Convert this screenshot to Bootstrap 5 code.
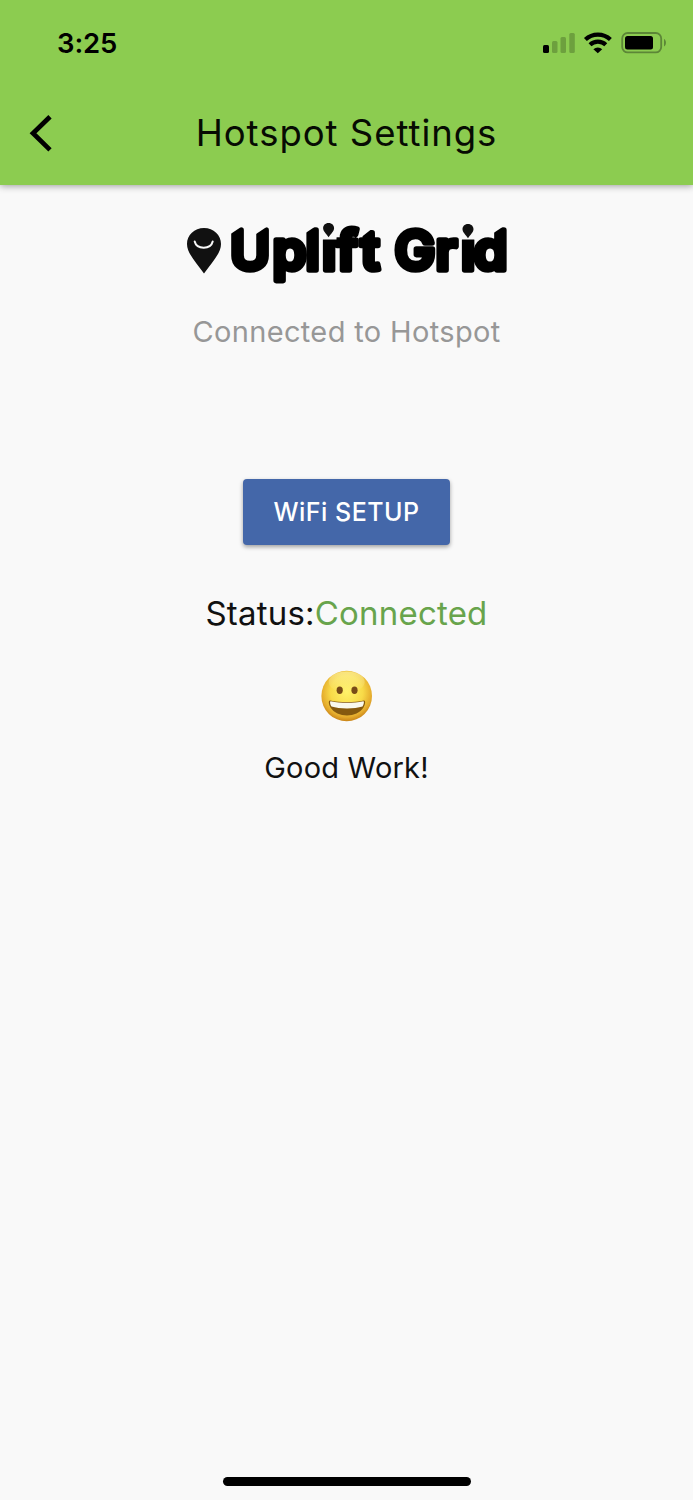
<!DOCTYPE html>
<html lang="en">
<head>
<meta charset="utf-8">
<meta name="viewport" content="width=device-width, initial-scale=1">
<title>Hotspot Settings</title>
<link href="https://cdn.jsdelivr.net/npm/bootstrap@5.3.0/dist/css/bootstrap.min.css" rel="stylesheet">
<style>
  body { font-family: Inter, "Liberation Sans", sans-serif; background: #f9f9f9; color: #111; letter-spacing: .5px; }
  .screen { height: 1500px; }
  .app-header { background: #8ccc50; height: 185px; box-shadow: 0 1px 7px rgba(0,0,0,.38); }
  .status-bar { height: 87px; padding: 0 26px 0 57px; }
  .clock { font-size: 27.5px; font-weight: 600; letter-spacing: -.1px; color: #000; line-height: 1; }
  .status-icons { margin-top: -1px; }
  .title-bar { height: 93px; padding: 0 29px; }
  .app-title { font-size: 36.5px; line-height: 1; letter-spacing: .98px; font-weight: 440; color: #070b03; }
  .side { width: 24px; }
  .chevron { margin-top: -2px; }
  .logo { margin-top: 25px; height: 88px; overflow: visible; }
  .logo text { font-family: Inter, sans-serif; font-weight: 600; font-size: 54.5px; letter-spacing: 0; stroke: #000; stroke-width: 5.6; stroke-linejoin: round; }
  .subtitle { margin-top: 19px; font-size: 29px; line-height: 30px; color: #979797; letter-spacing: .35px; }
  .btn-wifi { margin-top: 132px; width: 207px; height: 66px; padding: 2px 0 0; background: #4467a9; color: #fff; border: 0; border-radius: 4px; font-size: 25px; font-weight: 500; letter-spacing: .5px; box-shadow: 0 2px 4px rgba(0,0,0,.36); }
  .state { margin-top: 48px; font-size: 33px; line-height: 40px; letter-spacing: .2px; }
  .state-on { color: #68a44c; }
  .smile { margin-top: 37px; }
  .praise { margin-top: 29px; font-size: 29px; line-height: 34px; letter-spacing: .2px; }
  .home-bar { width: 248px; height: 9px; margin-bottom: 14px; }
</style>
</head>
<body>
<div class="screen d-flex flex-column">
  <header class="app-header flex-shrink-0">
    <div class="status-bar d-flex align-items-center justify-content-between">
      <span class="clock">3:25</span>
      <svg class="status-icons" width="126" height="26" viewBox="541 30 126 26" aria-hidden="true">
        <rect x="543" y="45" width="6" height="8" rx="1.5"/>
        <g fill="#6da03e"><rect x="552" y="41" width="5.5" height="12" rx="1.5"/><rect x="560.5" y="37" width="5.5" height="16" rx="1.5"/><rect x="569.3" y="33" width="5.5" height="20" rx="1.5"/></g>
        <g fill="none" stroke="#000" stroke-width="4.2"><path d="M585.4 39.500a18.200 18.200 0 0 1 25 0"/><path d="M590 44.700a11.500 11.500 0 0 1 15.800 0"/></g>
        <path d="M593.400 49.200a6.500 6.500 0 0 1 8.800 0l-4.400 4z"/>
        <rect x="622.2" y="33" width="39" height="19.400" rx="5.500" fill="none" stroke="#5c8637" stroke-width="1.800"/>
        <rect x="625" y="36" width="28" height="13.500" rx="2.500"/>
        <path d="M664 39c2.600 1.200 2.600 6.200 0 7.400z" fill="#5c8637"/>
      </svg>
    </div>
    <nav class="title-bar d-flex align-items-center justify-content-between">
      <svg class="side chevron" width="24" height="38" viewBox="0 0 24 38" role="img" aria-label="Back"><path d="M21 2.700 4 19.300l17 16.600" fill="none" stroke="#000" stroke-width="4.700"/></svg>
      <h1 class="app-title m-0">Hotspot Settings</h1>
      <span class="side"></span>
    </nav>
  </header>

  <main class="d-flex flex-column align-items-center flex-grow-1">
    <svg class="logo flex-shrink-0" width="324" height="88" viewBox="185 210 324 88">
      <path d="M204 228c9.600 0 17 7.200 17 16 0 9-8 17-17 29.500-9-12.500-17-20.500-17-29.500 0-8.800 7.400-16 17-16z" fill="#111"/>
      <path d="M194.700 241.500c2 8.200 16 8.200 18 0" fill="none" stroke="#f9f9f9" stroke-width="2" stroke-linecap="round"/>
      <text y="270" x="230 272.500 305.500 322 336.500 360.500 382 394.500 435.500 461 473.500">Uplift Grid</text>
      <g fill="#f9f9f9">
        <path d="M320.500 215h16v24.500h-16zM459.500 215h16v24.500h-16z"/>
        <path d="M229 223h18l-18 12zM254.500 223h18l-18 12zM304 222h18l-18 12zM492 222h18l-18 12zM361.500 226h14l-14 11z"/>
      </g>
      <g fill="#111"><path id="pin" d="M328.600 223c3.500 0 5.500 2.500 5.500 5.300 0 3-3.200 5.500-5.500 9-2.300-3.500-5.500-6-5.500-9 0-2.800 2-5.300 5.500-5.300z"/><use href="#pin" x="139.400" y="1"/></g>
    </svg>
    <p class="subtitle mb-0">Connected to Hotspot</p>
    <button type="button" class="btn btn-wifi flex-shrink-0">WiFi SETUP</button>
    <p class="state mb-0">Status:<span class="state-on">Connected</span></p>
    <svg class="smile flex-shrink-0" width="52" height="52" viewBox="0 0 52 52" role="img" aria-label="Grinning face">
      <defs>
        <radialGradient id="face" cx=".5" cy=".42" r=".58"><stop offset="0" stop-color="#fff26a"/><stop offset=".55" stop-color="#f8da48"/><stop offset=".85" stop-color="#e5ac2d"/><stop offset="1" stop-color="#c98317"/></radialGradient>
        <linearGradient id="shine" x2="0" y2="1"><stop offset="0" stop-color="#fff9b0" stop-opacity=".6"/><stop offset="1" stop-color="#fff9b0" stop-opacity="0"/></linearGradient>
      </defs>
      <circle cx="25.700" cy="26" r="25.300" fill="url(#face)"/>
      <ellipse cx="25.700" cy="12" rx="18" ry="10.500" fill="url(#shine)"/>
      <g fill="#784b17"><ellipse cx="18.700" cy="20.300" rx="3.100" ry="3.700"/><ellipse cx="33.500" cy="20.300" rx="3.100" ry="3.700"/></g>
      <path d="M9 30.500c10 2 24 2 34 0 2 0 1.200 4-.5 7-6.500 10.500-26.500 10.500-33 0-1.700-3-2.500-7-.5-7z" fill="#85590f"/>
      <path d="M9.700 31.200c10 2.200 22.600 2.200 32.600 0 1.200 0 .5 3.300-.8 5.300-8 2.500-23 2.500-31 0-1.300-2-2-5.300-.8-5.300z" fill="#f9f8ee"/>
    </svg>
    <p class="praise mb-0">Good Work!</p>
    <div class="home-bar bg-black rounded-pill mt-auto"></div>
  </main>
</div>
<script src="https://cdn.jsdelivr.net/npm/bootstrap@5.3.0/dist/js/bootstrap.bundle.min.js"></script>
</body>
</html>
